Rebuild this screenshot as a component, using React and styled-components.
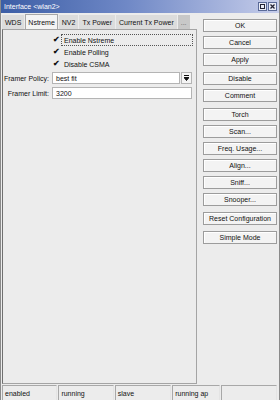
import React from 'react'
import styled, { createGlobalStyle } from 'styled-components'

const Global = createGlobalStyle`
  html, body { margin: 0; padding: 0; background: #ececec; }
  body { font-family: "Liberation Sans", Arial, sans-serif; font-size: 7px; color: #111; }
`

const Window = styled.div`
  width: 280px;
  height: 400px;
  display: flex;
  flex-direction: column;
  background: #ececec;
  border-left: 1px solid #8a8a8a;
  border-right: 1px solid #8a8a8a;
  box-sizing: border-box;
  overflow: hidden;
`

const TitleBar = styled.div`
  height: 13px;
  display: flex;
  align-items: center;
  justify-content: space-between;
  padding: 0 2px 0 3px;
  background: linear-gradient(to right, #3c5ea6 0%, #6f88c6 45%, #c6cdea 100%);
  color: #fff;
  font-size: 7px;
`

const TitleButtons = styled.div`
  display: flex;
  gap: 1px;
`

const TitleBtn = styled.div`
  width: 9px;
  height: 9px;
  background: #e9ecf6;
  border: 1px solid #5a6a98;
  box-sizing: border-box;
  display: flex;
  align-items: center;
  justify-content: center;
`

const Body = styled.div`
  flex: 1;
  display: flex;
  min-height: 0;
`

const Left = styled.div`
  width: 195px;
  display: flex;
  flex-direction: column;
  padding: 1px 0 0 1px;
`

const Tabs = styled.div`
  height: 15px;
  display: flex;
  align-items: flex-end;
  gap: 1px;
`

const Tab = styled.div`
  height: ${p => (p.$active ? 15 : 14)}px;
  padding: 0 2px;
  display: flex;
  align-items: center;
  box-sizing: border-box;
  background: ${p => (p.$active ? '#f4f4f4' : p.$dark ? '#c8c8c8' : '#dcdcdc')};
  color: ${p => (p.$dark ? '#666' : '#111')};
  border: 1px solid ${p => (p.$active ? '#a8a8a8' : 'transparent')};
  border-bottom: none;
  white-space: nowrap;
`

const Panel = styled.div`
  flex: 1;
  border: 1px solid #a4a4a4;
  border-left-color: #707070;
  background: #ececec;
  padding-top: 4px;
  display: flex;
  flex-direction: column;
`

const CheckRow = styled.div`
  height: 12px;
  display: flex;
  align-items: center;
  padding-left: 50px;
`

const Check = styled.span`
  width: 8px;
  font-size: 8px;
  font-weight: bold;
  line-height: 1;
`

const CheckLabel = styled.span`
  flex: 1;
  margin-right: 3px;
  height: 10px;
  display: flex;
  align-items: center;
  padding-left: 2px;
  border: 1px dotted ${p => (p.$focus ? '#555' : 'transparent')};
`

const FieldRow = styled.div`
  display: flex;
  align-items: center;
  margin-top: ${p => p.$mt || 0}px;
  padding-right: 4px;
`

const FieldLabel = styled.div`
  width: 46px;
  text-align: right;
  padding-right: 3px;
  white-space: nowrap;
`

const Input = styled.div`
  flex: 1;
  height: 10px;
  background: #fff;
  border: 1px solid #b4b4b4;
  display: flex;
  align-items: center;
  padding-left: 3px;
`

const DropBtn = styled.div`
  width: 9px;
  height: 10px;
  margin-left: 1px;
  border: 1px solid #b4b4b4;
  background: #f4f4f4;
  display: flex;
  align-items: center;
  justify-content: center;
`

const Buttons = styled.div`
  flex: 1;
  padding: 6px 2px 0 6px;
  display: flex;
  flex-direction: column;
`

const Btn = styled.div`
  height: 13px;
  box-sizing: border-box;
  margin-top: ${p => p.$mt}px;
  border: 1px solid #9c9c9c;
  background: #f3f3f3;
  box-shadow: inset 1px 1px 0 #fff;
  display: flex;
  align-items: center;
  justify-content: center;
  white-space: nowrap;
`

const StatusBar = styled.div`
  height: 15px;
  display: flex;
  padding: 1px 2px 0 1px;
  gap: 1px;
`

const Cell = styled.div`
  width: ${p => p.$w}px;
  border: 1px solid #a8a8a8;
  border-right-color: #e4e4e4;
  border-bottom: none;
  padding-left: 2px;
  display: flex;
  align-items: center;
  box-sizing: border-box;
`

const buttons = [
  ['OK', 0], ['Cancel', 4], ['Apply', 4], ['Disable', 6], ['Comment', 4],
  ['Torch', 6], ['Scan...', 4], ['Freq. Usage...', 4], ['Align...', 4],
  ['Sniff...', 4], ['Snooper...', 4], ['Reset Configuration', 6], ['Simple Mode', 6],
]

export default function App() {
  return (
    <>
      <Global />
      <Window>
        <TitleBar>
          <span>Interface &lt;wlan2&gt;</span>
          <TitleButtons>
            <TitleBtn>
              <svg width="5" height="5" viewBox="0 0 5 5">
                <rect x="0.5" y="0.5" width="4" height="4" fill="none" stroke="#223" />
              </svg>
            </TitleBtn>
            <TitleBtn>
              <svg width="5" height="5" viewBox="0 0 5 5">
                <path d="M0.5 0.5L4.5 4.5M4.5 0.5L0.5 4.5" stroke="#223" strokeWidth="1.3" />
              </svg>
            </TitleBtn>
          </TitleButtons>
        </TitleBar>
        <Body>
          <Left>
            <Tabs>
              <Tab>WDS</Tab>
              <Tab $active>Nstreme</Tab>
              <Tab>NV2</Tab>
              <Tab>Tx Power</Tab>
              <Tab>Current Tx Power</Tab>
              <Tab $dark>...</Tab>
            </Tabs>
            <Panel>
              <CheckRow>
                <Check>✔</Check>
                <CheckLabel $focus>Enable Nstreme</CheckLabel>
              </CheckRow>
              <CheckRow>
                <Check>✔</Check>
                <CheckLabel>Enable Polling</CheckLabel>
              </CheckRow>
              <CheckRow>
                <Check>✔</Check>
                <CheckLabel>Disable CSMA</CheckLabel>
              </CheckRow>
              <FieldRow $mt={2}>
                <FieldLabel>Framer Policy:</FieldLabel>
                <Input>best fit</Input>
                <DropBtn>
                  <svg width="5" height="6" viewBox="0 0 5 6">
                    <path d="M0 0.5H5M0 2.5L2.5 5.5L5 2.5Z" stroke="#111" fill="#111" strokeWidth="1" />
                  </svg>
                </DropBtn>
              </FieldRow>
              <FieldRow $mt={3}>
                <FieldLabel>Framer Limit:</FieldLabel>
                <Input>3200</Input>
              </FieldRow>
            </Panel>
          </Left>
          <Buttons>
            {buttons.map(([label, mt]) => (
              <Btn key={label} $mt={mt}>{label}</Btn>
            ))}
          </Buttons>
        </Body>
        <StatusBar>
          <Cell $w={56}>enabled</Cell>
          <Cell $w={56}>running</Cell>
          <Cell $w={57}>slave</Cell>
          <Cell $w={48}>running ap</Cell>
          <Cell $w={57} />
        </StatusBar>
      </Window>
    </>
  )
}
